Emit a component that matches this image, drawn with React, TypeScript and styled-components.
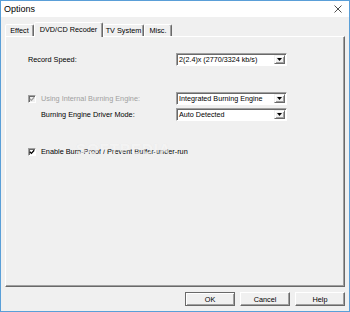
import React from "react";
import styled, { createGlobalStyle } from "styled-components";

const GlobalStyle = createGlobalStyle`
  html, body {
    margin: 0;
    padding: 0;
    background: #f0f0f0;
  }
  body {
    font-family: "Liberation Sans", Arial, sans-serif;
    color: #000;
  }
`;

const Window = styled.div`
  width: 350px;
  height: 312px;
  box-sizing: border-box;
  border: 1px solid #5a9fd8;
  background: #f0f0f0;
  display: flex;
  flex-direction: column;
`;

const TitleBar = styled.div`
  height: 16px;
  background: #fff;
  display: flex;
  align-items: center;
  justify-content: space-between;
  padding: 0 7px 0 3px;
  font-size: 9px;
`;

const Client = styled.div`
  flex: 1;
  display: flex;
  flex-direction: column;
  padding: 5px 4px 5px 4px;
`;

const TabStrip = styled.div`
  display: flex;
  align-items: flex-end;
  height: 14px;
  position: relative;
  z-index: 1;
`;

const Tab = styled.div<{ $width: number; $active?: boolean }>`
  width: ${({ $width }) => $width}px;
  height: ${({ $active }) => ($active ? 15 : 12)}px;
  margin-bottom: ${({ $active }) => ($active ? -1 : 0)}px;
  box-sizing: border-box;
  background: #f0f0f0;
  border-style: solid;
  border-width: 1px 1px 0 1px;
  border-color: #fff #696969 transparent #fff;
  border-radius: 2px 2px 0 0;
  box-shadow: inset -1px 0 #a0a0a0;
  font-size: 7.3px;
  display: flex;
  align-items: center;
  justify-content: center;
  padding-bottom: ${({ $active }) => ($active ? 2 : 0)}px;
  white-space: nowrap;
`;

const Panel = styled.div`
  height: 251px;
  box-sizing: border-box;
  border: 1px solid;
  border-color: #fff #696969 #696969 #fff;
  box-shadow: inset -1px -1px #a0a0a0;
  position: relative;
`;

const Form = styled.div`
  display: flex;
  flex-direction: column;
  padding: 16px 0 0 22px;
`;

const Row = styled.div<{ $gap?: number }>`
  display: grid;
  grid-template-columns: 148px 111px;
  align-items: center;
  height: 13px;
  margin-top: ${({ $gap }) => $gap ?? 0}px;
`;

const Label = styled.div<{ $indent?: number; $disabled?: boolean }>`
  font-size: 7.3px;
  padding-left: ${({ $indent }) => $indent ?? 0}px;
  color: ${({ $disabled }) => ($disabled ? "#a0a0a0" : "#000")};
  white-space: nowrap;
`;

const CheckLine = styled.div`
  display: flex;
  align-items: center;
  gap: 5px;
`;

const Box = styled.div<{ $disabled?: boolean }>`
  width: 8px;
  height: 8px;
  box-sizing: border-box;
  border: 1px solid;
  border-color: #a0a0a0 #fff #fff #a0a0a0;
  box-shadow: inset 1px 1px #696969;
  background: ${({ $disabled }) => ($disabled ? "#f0f0f0" : "#fff")};
  display: flex;
  align-items: center;
  justify-content: center;
`;

const Combo = styled.div`
  width: 111px;
  height: 13px;
  box-sizing: border-box;
  border: 1px solid;
  border-color: #a0a0a0 #fff #fff #a0a0a0;
  box-shadow: inset 1px 1px #696969;
  background: #fff;
  display: flex;
  align-items: center;
  justify-content: space-between;
  padding: 0 1px 0 2px;
  font-size: 7.2px;
  white-space: nowrap;
`;

const DropButton = styled.div`
  width: 11px;
  height: 9px;
  box-sizing: border-box;
  background: #f0f0f0;
  border: 1px solid;
  border-color: #f0f0f0 #696969 #696969 #f0f0f0;
  box-shadow: inset 1px 1px #fff, inset -1px -1px #a0a0a0;
  display: flex;
  align-items: center;
  justify-content: center;
`;

const Watermark = styled.div`
  position: absolute;
  left: 70px;
  top: 103px;
  font-size: 15px;
  font-weight: bold;
  letter-spacing: 1px;
  color: rgba(255, 255, 255, 0.55);
  text-shadow: 0 0 1px rgba(200, 200, 200, 0.25);
  pointer-events: none;
`;

const ButtonRow = styled.div`
  display: flex;
  justify-content: flex-end;
  gap: 5px;
  margin-top: 5px;
  height: 14px;
`;

const Button = styled.div<{ $default?: boolean }>`
  width: 50px;
  height: 14px;
  box-sizing: border-box;
  border: 1px solid;
  border-color: ${({ $default }) =>
    $default ? "#696969" : "#fff #696969 #696969 #fff"};
  box-shadow: ${({ $default }) =>
    $default
      ? "inset 1px 1px #fff, inset -1px -1px #a0a0a0"
      : "inset -1px -1px #a0a0a0"};
  background: #f0f0f0;
  display: flex;
  align-items: center;
  justify-content: center;
  font-size: 7.3px;
`;

const Arrow = () => (
  <svg width="5" height="3" viewBox="0 0 5 3">
    <path d="M0 0h5L2.5 3z" fill="#000" />
  </svg>
);

const Check = ({ color }: { color: string }) => (
  <svg width="6" height="6" viewBox="0 0 6 6">
    <path d="M0.8 2.8l1.6 1.6L5.2 1.2" stroke={color} strokeWidth="1.3" fill="none" />
  </svg>
);

const Select: React.FC<{ value: string }> = ({ value }) => (
  <Combo>
    <span>{value}</span>
    <DropButton>
      <Arrow />
    </DropButton>
  </Combo>
);

const tabs = [
  { name: "Effect", width: 29 },
  { name: "DVD/CD Recoder", width: 69, active: true },
  { name: "TV System", width: 41 },
  { name: "Misc.", width: 28 },
];

const App: React.FC = () => (
  <>
    <GlobalStyle />
    <Window>
      <TitleBar>
        <span>Options</span>
        <svg width="8" height="8" viewBox="0 0 8 8">
          <path d="M0.5 0.5l7 7M7.5 0.5l-7 7" stroke="#222" strokeWidth="0.8" />
        </svg>
      </TitleBar>
      <Client>
        <TabStrip>
          {tabs.map((t) => (
            <Tab key={t.name} $width={t.width} $active={t.active}>
              {t.name}
            </Tab>
          ))}
        </TabStrip>
        <Panel>
          <Form>
            <Row>
              <Label>Record Speed:</Label>
              <Select value="2(2.4)x (2770/3324 kb/s)" />
            </Row>
            <Row $gap={26}>
              <CheckLine>
                <Box $disabled>
                  <Check color="#a0a0a0" />
                </Box>
                <Label $disabled>Using Internal Burning Engine:</Label>
              </CheckLine>
              <Select value="Integrated Burning Engine" />
            </Row>
            <Row $gap={3}>
              <Label $indent={13}>Burning Engine Driver Mode:</Label>
              <Select value="Auto Detected" />
            </Row>
            <Row $gap={24}>
              <CheckLine>
                <Box>
                  <Check color="#000" />
                </Box>
                <Label>Enable Burn-Proof / Prevent Buffer-under-run</Label>
              </CheckLine>
            </Row>
          </Form>
          <Watermark>SOFTPEDIA</Watermark>
        </Panel>
        <ButtonRow>
          <Button $default>OK</Button>
          <Button>Cancel</Button>
          <Button>Help</Button>
        </ButtonRow>
      </Client>
    </Window>
  </>
);

export default App;
